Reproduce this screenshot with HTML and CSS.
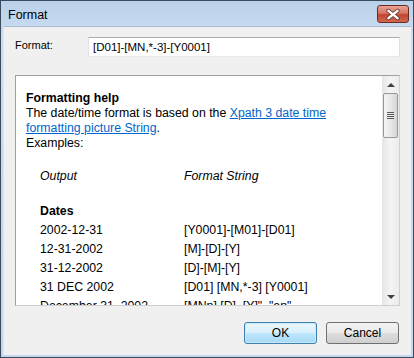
FILE: index.html
```html
<!DOCTYPE html>
<html lang="en">
<head>
    <meta charset="UTF-8">
    <title>Format</title>
    <link rel="stylesheet" href="styles.css">
</head>
<body>
    <div class="window">
        <div class="titlebar">
            <span class="title">Format</span>
            <button class="close" title="Close">
                <svg width="32" height="17" viewBox="0 0 32 17">
                    <path d="M11 4.5 L21 12.5 M21 4.5 L11 12.5" stroke="#5b2a24" stroke-width="4.2" stroke-linecap="round"/>
                    <path d="M11 4.5 L21 12.5 M21 4.5 L11 12.5" stroke="#ffffff" stroke-width="2.4" stroke-linecap="round"/>
                </svg>
            </button>
        </div>
        <div class="client">
            <div class="field-row">
                <label for="format">Format:</label>
                <input type="text" id="format" value="[D01]-[MN,*-3]-[Y0001]">
            </div>
            <div class="help">
                <div class="help-body">
                    <div class="help-title">Formatting help</div>
                    <p>The date/time format is based on the <a href="#">Xpath 3 date time formatting picture String</a>.<br>Examples:</p>
                    <table class="examples">
                        <tr class="head"><td>Output</td><td>Format String</td></tr>
                        <tr class="spacer"><td></td><td></td></tr>
                        <tr class="group"><td>Dates</td><td></td></tr>
                        <tr><td>2002-12-31</td><td>[Y0001]-[M01]-[D01]</td></tr>
                        <tr><td>12-31-2002</td><td>[M]-[D]-[Y]</td></tr>
                        <tr><td>31-12-2002</td><td>[D]-[M]-[Y]</td></tr>
                        <tr><td>31 DEC 2002</td><td>[D01] [MN,*-3] [Y0001]</td></tr>
                        <tr><td>December 31, 2002</td><td>[MNn] [D], [Y]", "en"</td></tr>
                    </table>
                </div>
                <div class="scrollbar">
                    <div class="arrow up"></div>
                    <div class="track">
                        <div class="thumb"><span class="grip"></span></div>
                    </div>
                    <div class="arrow down"></div>
                </div>
            </div>
            <div class="buttons">
                <button class="btn default">OK</button>
                <button class="btn">Cancel</button>
            </div>
        </div>
    </div>
</body>
</html>
```

FILE: styles.css
```css
body {
    margin: 0;
    font-family: "Liberation Sans", Arial, sans-serif;
    background-color: #ffffff;
}
.window {
    width: 414px;
    height: 358px;
    box-sizing: border-box;
    border: 1px solid #3b4a5c;
    background: linear-gradient(#b9d1ea, #c9dcf0 30px, #c2d8ee);
    display: flex;
    flex-direction: column;
    padding: 0 2px 2px 2px;
}
.titlebar {
    height: 25px;
    display: flex;
    align-items: center;
    justify-content: space-between;
    padding-left: 5px;
    flex-shrink: 0;
}
.title {
    font-size: 12.5px;
    color: #000;
    margin-top: 2px;
}
.close {
    width: 32px;
    height: 18px;
    padding: 0;
    margin-right: 2px;
    margin-top: 1px;
    border: 1px solid #6b2a22;
    border-radius: 3px;
    background: linear-gradient(#e8a293, #d57565 45%, #c0452f 55%, #cf6a4e);
    display: flex;
    align-items: center;
    justify-content: center;
}
.close svg {
    display: block;
}
.client {
    flex: 1;
    background-color: #f0f0f0;
    border-top: 1px solid #a9bed6;
    border-left: 1px solid #dfe6ee;
    display: flex;
    flex-direction: column;
    padding: 10px 11px 0 10px;
}
.field-row {
    display: flex;
    align-items: center;
    height: 20px;
}
.field-row label {
    font-size: 11px;
    width: 73px;
    padding-left: 1px;
    margin-top: -4px;
}
.field-row input {
    flex: 1;
    height: 20px;
    box-sizing: border-box;
    border: 1px solid #abadb3;
    border-color: #abadb3 #dbdfe6 #e3e9ef #e2e3ea;
    padding: 0 4px;
    font-family: "Liberation Sans", Arial, sans-serif;
    font-size: 11.5px;
    color: #000;
}
.help {
    margin-top: 18px;
    margin-left: 1px;
    height: 231px;
    box-sizing: border-box;
    border: 1px solid #d0d0d0;
    border-top-color: #a0a0a0;
    border-left-color: #a0a0a0;
    background-color: #ffffff;
    display: flex;
    overflow: hidden;
}
.help-body {
    flex: 1;
    padding: 15px 10px 0 10px;
    font-size: 12.3px;
    line-height: 15px;
    color: #000;
    overflow: hidden;
}
.help-title {
    font-weight: bold;
}
.help-body p {
    margin: 0;
}
.help-body a {
    color: #0066cc;
}
.examples {
    border-collapse: collapse;
    margin-top: 16px;
    margin-left: 14px;
    font-size: 12.3px;
}
.examples td {
    padding: 0;
    height: 19px;
    vertical-align: middle;
    white-space: nowrap;
}
.examples td:first-child {
    width: 144px;
}
.examples .head td {
    font-style: italic;
}
.examples .spacer td {
    height: 16px;
}
.examples .group td {
    font-weight: bold;
}
.scrollbar {
    width: 17px;
    flex-shrink: 0;
    background: linear-gradient(90deg, #e6e6e6, #f4f4f4 50%, #ececec);
    display: flex;
    flex-direction: column;
}
.arrow {
    height: 17px;
    display: flex;
    align-items: center;
    justify-content: center;
}
.arrow::before {
    content: "";
    border-left: 4px solid transparent;
    border-right: 4px solid transparent;
}
.arrow.up::before {
    border-bottom: 4px solid #404040;
}
.arrow.down::before {
    border-top: 4px solid #404040;
}
.track {
    flex: 1;
}
.thumb {
    width: 15px;
    height: 45px;
    margin-left: 1px;
    box-sizing: border-box;
    border: 1px solid #979797;
    border-radius: 2px;
    background: linear-gradient(90deg, #f3f3f3, #e8e8e8 50%, #d6d6d6);
    display: flex;
    align-items: center;
    justify-content: center;
}
.grip {
    width: 7px;
    height: 7px;
    background: repeating-linear-gradient(#5a5a5a 0 1px, transparent 1px 2px);
}
.buttons {
    margin-top: 16px;
    display: flex;
    justify-content: flex-end;
    gap: 9px;
    padding-right: 1px;
}
.btn {
    width: 73px;
    height: 22px;
    box-sizing: border-box;
    border: 1px solid #707070;
    border-radius: 3px;
    background: linear-gradient(#f2f2f2, #ebebeb 50%, #dddddd 50%, #cfcfcf);
    font-family: "Liberation Sans", Arial, sans-serif;
    font-size: 12px;
    color: #000;
    padding: 0;
}
.btn.default {
    border-color: #3c7fb1;
    background: linear-gradient(#eaf6fd, #d9f0fc 50%, #bee6fd 50%, #a7d9f5);
    box-shadow: inset 0 0 0 1px #cde9f8;
}
```
